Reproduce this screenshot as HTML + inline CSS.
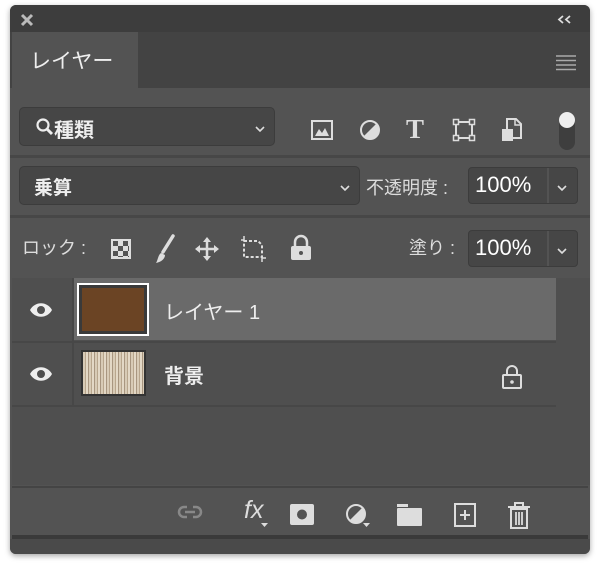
<!DOCTYPE html>
<html><head><meta charset="utf-8"><style>
*{margin:0;padding:0;box-sizing:border-box}
body{width:600px;height:568px;background:#fff;position:relative;overflow:hidden;font-family:"Liberation Sans","Noto Sans CJK JP",sans-serif;color:#e6e6e6}
.a{position:absolute}
.box{position:absolute;background:#464646;border:1px solid #3c3c3c;border-radius:5px}
svg{position:absolute;overflow:visible}
</style></head><body>
<div class="a" style="left:10px;top:5px;width:580px;height:549px;background:#535353;border-radius:6px;box-shadow:0 2px 6px rgba(0,0,0,.35);overflow:hidden">
 <div class="a" style="left:0;top:0;width:580px;height:27px;background:#3d3d3d"></div>
 <svg style="left:11px;top:9px" width="12" height="12"><path d="M1 1L11 11M11 1L1 11" stroke="#bbb" stroke-width="3"/></svg>
 <svg style="left:548px;top:10px" width="14" height="9"><path d="M5 1L1 4.5L5 8M12 1L8 4.5L12 8" stroke="#ddd" stroke-width="1.8" fill="none"/></svg>
 <div class="a" style="left:0;top:27px;width:580px;height:56px;background:#434343"></div>
 <div class="a" style="left:2px;top:27px;width:126px;height:57px;background:#535353"></div>
 <div class="a" style="left:20px;top:40px;font-size:21px;color:#eee">レイヤー</div>
 <svg style="left:546px;top:50px" width="20" height="16"><path d="M0 1H20M0 5.5H20M0 10H20M0 14.5H20" stroke="#aaa" stroke-width="1.6"/></svg>
 <div class="box" style="left:9px;top:102px;width:256px;height:39px"></div>
 <svg style="left:26px;top:113px" width="18" height="18"><circle cx="7" cy="7" r="5.5" stroke="#eee" stroke-width="2.2" fill="none"/><path d="M11 11L16 16" stroke="#eee" stroke-width="3"/></svg>
 <div class="a" style="left:44px;top:109px;font-size:20px;font-weight:bold;color:#eee">種類</div>
 <svg style="left:245px;top:121px" width="10" height="6"><path d="M1 1L5 5L9 1" stroke="#ddd" stroke-width="1.6" fill="none"/></svg>
 <svg style="left:301px;top:115px" width="22" height="20"><rect x="1" y="1" width="20" height="18" stroke="#ddd" stroke-width="2" fill="none"/><path d="M4 16L8 9L11 13L14 8L18 16Z" fill="#ddd"/></svg>
 <svg style="left:349px;top:114px" width="22" height="22"><circle cx="11" cy="11" r="9" stroke="#ddd" stroke-width="2" fill="none"/><path d="M17.4 4.6A9 9 0 0 1 4.6 17.4Z" fill="#ddd"/></svg>
 <div class="a" style="left:396px;top:109px;font-size:27px;font-family:'Liberation Serif',serif;font-weight:bold;color:#ddd;line-height:30px">T</div>
 <svg style="left:443px;top:114px" width="22" height="22"><rect x="3" y="3" width="16" height="16" stroke="#ddd" stroke-width="2" fill="none"/><g fill="#535353" stroke="#ddd" stroke-width="1.5"><rect x="0.5" y="0.5" width="5" height="5"/><rect x="16.5" y="0.5" width="5" height="5"/><rect x="0.5" y="16.5" width="5" height="5"/><rect x="16.5" y="16.5" width="5" height="5"/></g></svg>
 <svg style="left:491px;top:113px" width="22" height="24"><path d="M6 1H15L20 6V20H6Z" stroke="#ddd" stroke-width="2" fill="none"/><path d="M14 1V7H20" stroke="#ddd" stroke-width="1.5" fill="none"/><rect x="1" y="11" width="11" height="12" fill="#ddd"/></svg>
 <div class="a" style="left:549px;top:107px;width:16px;height:38px;border-radius:8px;background:#3e3e3e"></div>
 <div class="a" style="left:549px;top:107px;width:16px;height:16px;border-radius:8px;background:#eee"></div>
 <div class="a" style="left:0;top:150px;width:580px;height:3px;background:#474747"></div>
 <div class="box" style="left:9px;top:161px;width:341px;height:39px"></div>
 <div class="a" style="left:24px;top:168px;font-size:19px;font-weight:bold;color:#eee">乗算</div>
 <svg style="left:330px;top:180px" width="10" height="6"><path d="M1 1L5 5L9 1" stroke="#ddd" stroke-width="1.6" fill="none"/></svg>
 <div class="a" style="left:356px;top:169px;font-size:18px;color:#ddd">不透明度 :</div>
 <div class="box" style="left:458px;top:162px;width:110px;height:37px;border-radius:4px"></div>
 <div class="a" style="left:537px;top:163px;width:2px;height:35px;background:#535353"></div>
 <div class="a" style="left:465px;top:167px;font-size:22px;color:#fff">100%</div>
 <svg style="left:547px;top:180px" width="10" height="6"><path d="M1 1L5 5L9 1" stroke="#ddd" stroke-width="1.6" fill="none"/></svg>
 <div class="a" style="left:0;top:210px;width:580px;height:3px;background:#474747"></div>
 <div class="a" style="left:12px;top:229px;font-size:18px;color:#ddd">ロック :</div>
 <div class="a" style="left:101px;top:234px;width:20px;height:20px;background:repeating-conic-gradient(#ddd 0 25%,#535353 0 50%) 0 0/10px 10px;border:2px solid #ddd"></div>
 <svg style="left:145px;top:230px" width="20" height="30"><path d="M18 1L8 17" stroke="#ddd" stroke-width="3.5" stroke-linecap="round"/><path d="M6 18C3 20 3 25 1 28C6 27 10 24 10 20Z" fill="#ddd"/></svg>
 <svg style="left:185px;top:232px" width="24" height="24"><path d="M12 2V22M2 12H22" stroke="#ddd" stroke-width="2.5"/><path d="M12 0L8 5H16ZM12 24L8 19H16ZM0 12L5 8V16ZM24 12L19 8V16Z" fill="#ddd"/></svg>
 <svg style="left:231px;top:231px" width="26" height="26"><path d="M3 5H17L21 9V21H3Z" stroke="#ddd" stroke-width="2" stroke-dasharray="3 2" fill="none"/><path d="M0 4H3M3 0V4M21 22H25M21 21V26" stroke="#ddd" stroke-width="1.5"/></svg>
 <svg style="left:280px;top:229px" width="22" height="27"><path d="M5 12V8A6 6 0 0 1 17 8V12" stroke="#ddd" stroke-width="2.5" fill="none"/><rect x="1" y="12" width="20" height="14" rx="2" fill="#ddd"/><circle cx="11" cy="19" r="2" fill="#535353"/></svg>
 <div class="a" style="left:399px;top:229px;font-size:18px;color:#ddd">塗り :</div>
 <div class="box" style="left:458px;top:225px;width:110px;height:37px;border-radius:4px"></div>
 <div class="a" style="left:537px;top:226px;width:2px;height:35px;background:#535353"></div>
 <div class="a" style="left:465px;top:230px;font-size:22px;color:#fff">100%</div>
 <svg style="left:547px;top:243px" width="10" height="6"><path d="M1 1L5 5L9 1" stroke="#ddd" stroke-width="1.6" fill="none"/></svg>
 <div class="a" style="left:2px;top:273px;width:544px;height:127px;background:#4f4f4f"></div>
 <div class="a" style="left:64px;top:273px;width:482px;height:62px;background:#6a6a6a"></div>
 <div class="a" style="left:2px;top:336px;width:544px;height:2px;background:#474747"></div>
 <div class="a" style="left:62px;top:273px;width:2px;height:127px;background:#474747"></div>
 <div class="a" style="left:546px;top:273px;width:34px;height:207px;background:#4f4f4f"></div>
 <div class="a" style="left:2px;top:400px;width:544px;height:80px;background:#4f4f4f"></div>
 <div class="a" style="left:2px;top:400px;width:544px;height:2px;background:#474747"></div>
 <svg style="left:19px;top:297px" width="24" height="16"><path d="M1 8C6 -1 18 -1 23 8C18 17 6 17 1 8Z" fill="#eee"/><circle cx="12" cy="8" r="4" fill="#4f4f4f"/></svg>
 <svg style="left:19px;top:361px" width="24" height="16"><path d="M1 8C6 -1 18 -1 23 8C18 17 6 17 1 8Z" fill="#eee"/><circle cx="12" cy="8" r="4" fill="#4f4f4f"/></svg>
 <div class="a" style="left:67px;top:278px;width:72px;height:53px;border:2px solid #fff;background:#3a3a3a;padding:3px"><div style="width:100%;height:100%;background:#6b4424"></div></div>
 <div class="a" style="left:71px;top:345px;width:65px;height:46px;border:2px solid #333;background:repeating-linear-gradient(90deg,#d8cbb6 0 2px,#b8a68d 2px 3px,#e3d8c6 3px 5px,#a89680 5px 6px)"></div>
 <div class="a" style="left:154px;top:291px;font-size:20px;color:#eee">レイヤー 1</div>
 <div class="a" style="left:154px;top:355px;font-size:20px;font-weight:bold;color:#eee">背景</div>
 <svg style="left:491px;top:359px" width="22" height="26"><path d="M6 11V7A5 5 0 0 1 16 7V11" stroke="#ddd" stroke-width="2" fill="none"/><rect x="2" y="11" width="18" height="13" rx="1" stroke="#ddd" stroke-width="2" fill="none"/><circle cx="11" cy="18" r="1.8" fill="#ddd"/></svg>
 <div class="a" style="left:2px;top:481px;width:576px;height:2px;background:#444"></div>
 <div class="a" style="left:2px;top:483px;width:576px;height:47px;background:#535353"></div>
 <div class="a" style="left:2px;top:530px;width:576px;height:4px;background:#3a3a3a"></div>
 <div class="a" style="left:0;top:534px;width:580px;height:15px;background:#4a4a4a"></div>
 <svg style="left:167px;top:500px" width="26" height="14"><path d="M10 2H7A5 5 0 0 0 7 12H10M16 2H19A5 5 0 0 1 19 12H16M8 7H18" stroke="#888" stroke-width="2.5" fill="none"/></svg>
 <div class="a" style="left:234px;top:491px;font-size:25px;font-style:italic;color:#ddd;font-family:'Liberation Sans',sans-serif">fx</div>
 <svg style="left:251px;top:518px" width="7" height="5"><path d="M0 0H7L3.5 4Z" fill="#ddd"/></svg>
 <svg style="left:280px;top:499px" width="24" height="21"><rect width="24" height="21" rx="2" fill="#ddd"/><circle cx="12" cy="10.5" r="5" fill="#535353"/></svg>
 <svg style="left:336px;top:499px" width="24" height="26"><circle cx="10" cy="10" r="9" stroke="#ddd" stroke-width="2" fill="none"/><path d="M16.4 3.6A9 9 0 0 1 3.6 16.4Z" fill="#ddd"/><path d="M17 19H24L20.5 23Z" fill="#ddd"/></svg>
 <svg style="left:387px;top:499px" width="25" height="22"><rect x="0" y="0" width="11" height="3" fill="#ddd"/><rect x="0" y="4" width="25" height="18" rx="1" fill="#ddd"/></svg>
 <svg style="left:444px;top:498px" width="22" height="24"><rect x="1" y="1" width="20" height="22" stroke="#ddd" stroke-width="2" fill="none"/><path d="M11 7V17M6 12H16" stroke="#ddd" stroke-width="2"/></svg>
 <svg style="left:498px;top:497px" width="22" height="27"><path d="M0 5H22M7 5V1H15V5" stroke="#ddd" stroke-width="2" fill="none"/><path d="M3 7H19V26H3Z" stroke="#ddd" stroke-width="2" fill="none"/><path d="M8 10V23M11 10V23M14 10V23" stroke="#ddd" stroke-width="1.8"/></svg>
</div>
</body></html>
